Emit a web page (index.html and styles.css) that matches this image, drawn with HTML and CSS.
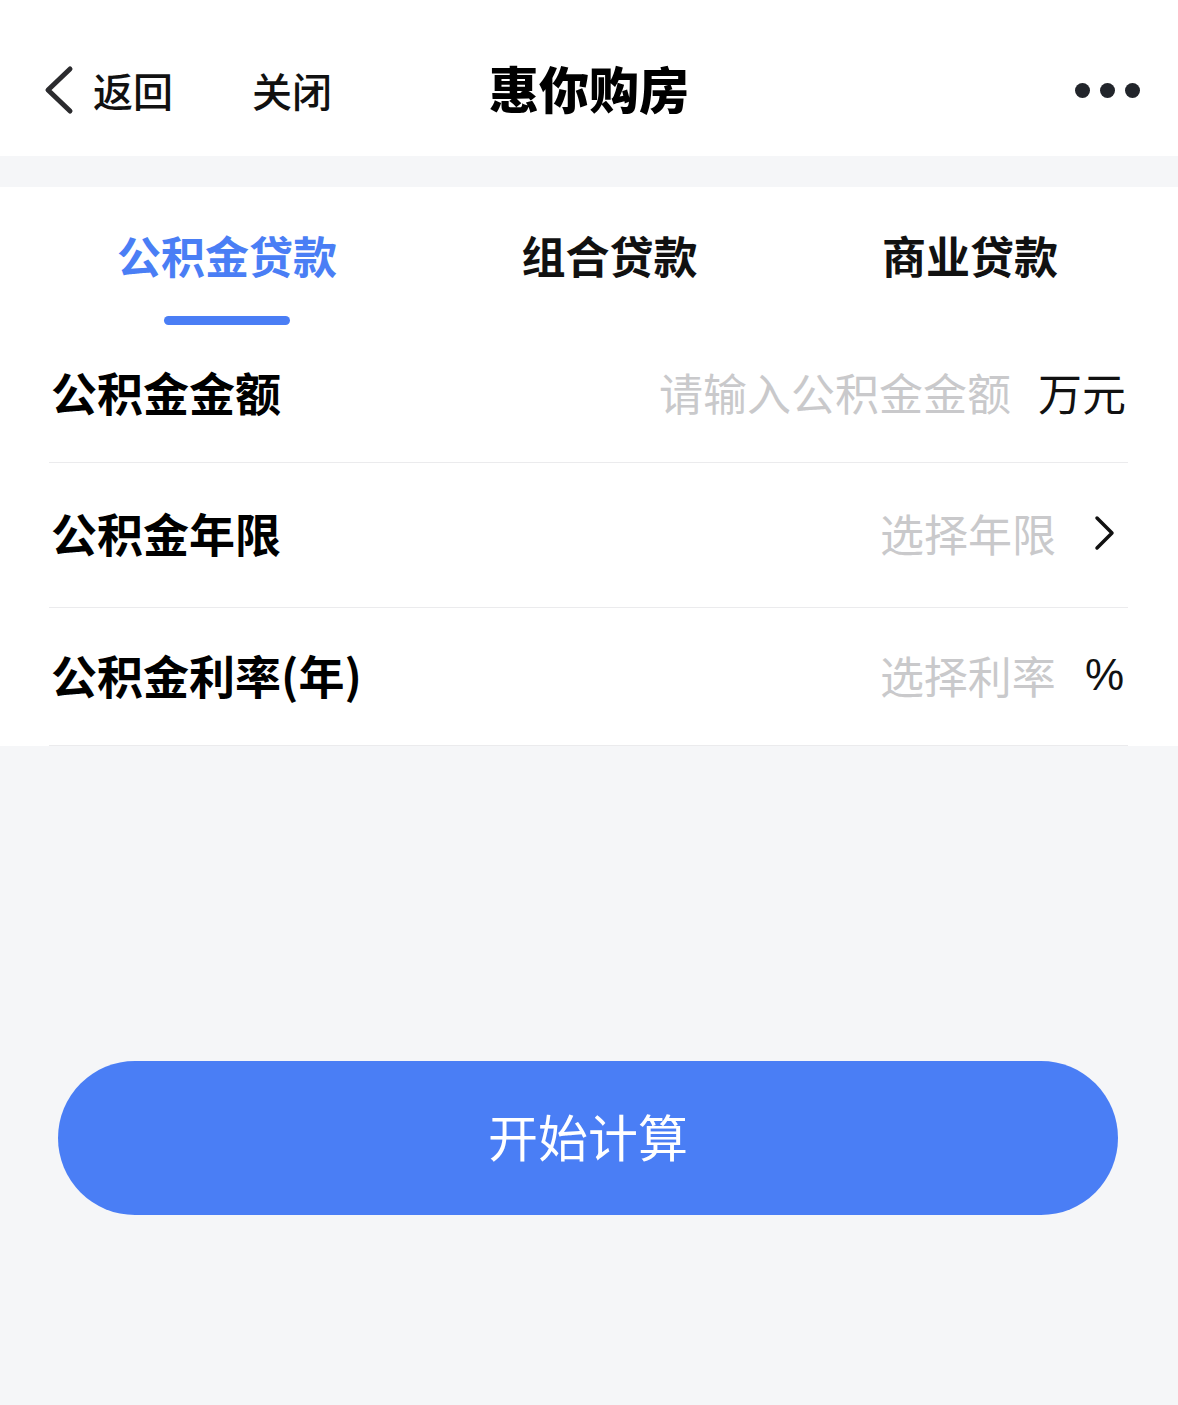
FILE: index.html
```html
<!DOCTYPE html>
<html lang="zh-CN">
<head>
<meta charset="utf-8">
<title>惠你购房</title>
<link rel="stylesheet" href="styles.css">
</head>
<body>
<header class="nav">
  <div class="nav-left">
    <span class="back">
      <svg class="back-icon" width="32" height="50" viewBox="0 0 32 50"><path d="M28 4 L6 25 L28 46" fill="none" stroke="#2b2b2e" stroke-width="5" stroke-linecap="round" stroke-linejoin="round"/></svg>
      <span class="nav-text">返回</span>
    </span>
    <span class="nav-text close">关闭</span>
  </div>
  <h1 class="nav-title">惠你购房</h1>
  <div class="nav-more"><i></i><i></i><i></i></div>
</header>
<div class="spacer"></div>
<main class="panel">
  <nav class="tabs">
    <div class="tab active">公积金贷款<span class="bar"></span></div>
    <div class="tab">组合贷款</div>
    <div class="tab">商业贷款</div>
  </nav>
  <div class="row row-first">
    <span class="label">公积金金额</span>
    <span class="value"><span class="ph">请输入公积金金额</span><span class="unit">万元</span></span>
  </div>
  <div class="row row-mid">
    <span class="label">公积金年限</span>
    <span class="value"><span class="ph">选择年限</span>
      <svg class="arrow" width="22" height="36" viewBox="0 0 22 36"><path d="M3 3 L18 18 L3 33" fill="none" stroke="#111" stroke-width="3.5" stroke-linecap="round" stroke-linejoin="round"/></svg>
    </span>
  </div>
  <div class="row row-last">
    <span class="label">公积金利率(年)</span>
    <span class="value"><span class="ph">选择利率</span><span class="pct">%</span></span>
  </div>
</main>
<div class="actions">
  <button class="calc">开始计算</button>
</div>
</body>
</html>
```
FILE: styles.css
```css
html, body {
  margin: 0;
  padding: 0;
  background: #f5f6f8;
  font-family: "Noto Sans CJK SC", "Noto Sans", sans-serif;
  color: #000;
}
.nav {
  height: 156px;
  background: #fff;
  display: flex;
  align-items: center;
  position: relative;
  padding: 24px 38px 0 42px;
  box-sizing: border-box;
}
.nav-left {
  display: flex;
  align-items: center;
  flex: 1;
}
.back {
  display: flex;
  align-items: center;
  gap: 19px;
}
.back-icon { display: block; }
.nav-text {
  font-size: 40px;
  line-height: 1;
  font-weight: 500;
  color: #111;
}
.close { margin-left: 79px; }
.nav-title {
  position: absolute;
  left: 0;
  right: 0;
  top: 24px;
  bottom: 0;
  margin: 0;
  padding-bottom: 6px;
  display: flex;
  align-items: center;
  justify-content: center;
  font-size: 50px;
  font-weight: 900;
  line-height: 1;
  pointer-events: none;
}
.nav-more {
  display: flex;
  gap: 10px;
  align-items: center;
}
.nav-more i {
  display: block;
  width: 15px;
  height: 15px;
  border-radius: 50%;
  background: #22252b;
}
.spacer { height: 31px; }
.panel {
  background: #fff;
  padding: 0 50px 0 49px;
}
.tabs {
  display: flex;
  justify-content: space-between;
  height: 138px;
  padding: 0 70px 0 68px;
}
.tab {
  position: relative;
  font-size: 44px;
  font-weight: 700;
  line-height: 1;
  padding-top: 46px;
  color: #111;
}
.tab.active { color: #4a7ef5; }
.bar {
  position: absolute;
  left: 50%;
  top: 129px;
  width: 126px;
  height: 9px;
  margin-left: -63px;
  border-radius: 5px;
  background: #4a7ef5;
}
.row {
  display: flex;
  align-items: center;
  justify-content: space-between;
  border-bottom: 1px solid #ebebed;
}
.row-first { height: 137px; }
.row-mid { height: 144px; }
.row-last { height: 137px; }
.label {
  font-size: 46px;
  font-weight: 700;
  line-height: 1;
  margin-left: 2px;
  padding-bottom: 6px;
}
.value {
  display: flex;
  align-items: center;
  font-size: 44px;
  line-height: 1;
  padding-bottom: 4px;
}
.ph { color: #c9c9cb; }
.unit {
  margin-left: 27px;
  margin-right: 2px;
  color: #111;
}
.arrow {
  display: block;
  margin-left: 38px;
  margin-right: 12px;
}
.pct {
  margin-left: 29px;
  margin-right: 4px;
  font-family: "Liberation Sans", sans-serif;
  font-size: 44px;
  color: #111;
}
.actions {
  padding: 315px 60px 0 58px;
}
.calc {
  display: block;
  width: 100%;
  height: 154px;
  border: none;
  border-radius: 77px;
  background: #4a7ef5;
  color: #fff;
  font-family: "Noto Sans CJK SC", sans-serif;
  font-size: 50px;
  font-weight: 400;
  padding: 0 0 6px;
}
```
